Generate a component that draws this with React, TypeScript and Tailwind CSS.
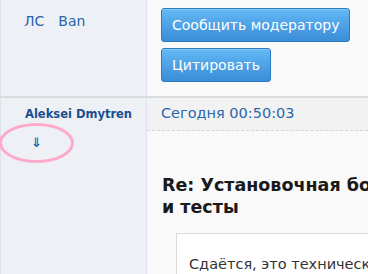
const btn =
  "h-[34px] px-[10px] border border-[#2b7bc4] rounded-[3px] bg-gradient-to-b from-[#63b8f4] to-[#3a8dd8] text-white text-[14px] leading-none text-left shadow-[inset_0_1px_0_rgba(255,255,255,0.25)]";

export default function App() {
  return (
    <div className="w-[368px] h-[274px] overflow-hidden bg-[#f9f9f9] font-['DejaVu_Sans',sans-serif]">
      {/* post actions */}
      <div className="flex h-[96px]">
        <div className="w-[147px] shrink-0 bg-[#edf1f6] border-l border-r border-[#dde3ea] pl-[23px] pt-[11px] flex gap-[14px] text-[14px] text-[#2a64aa]">
          <span>ЛС</span>
          <span>Ban</span>
        </div>
        <div className="flex-1 pl-[14px] pt-[8px] flex flex-col items-start gap-[6px]">
          <button className={btn}>Сообщить модератору</button>
          <button className={btn + " h-[33px]"}>Цитировать</button>
        </div>
      </div>

      <div className="h-[2px] bg-[#d9dcdf]" />

      {/* next post */}
      <div className="flex h-[176px]">
        <div className="relative w-[147px] shrink-0 bg-[#edf1f6] border-l border-r border-[#dde3ea] pt-[8px]">
          <div className="pl-[24px] text-[11.5px] font-bold text-[#1b4f8f] whitespace-nowrap overflow-hidden">
            Aleksei Dmytren
          </div>
          <div className="ml-[30px] mt-[13px] text-[13px] font-bold leading-none text-[#1a5fb0]">⇓</div>
          <div className="absolute left-[-2px] top-[25px] w-[75px] h-[40px] rounded-[50%] border-[3px] border-[#ffaacc]" />
        </div>
        <div className="flex-1 min-w-0">
          <div className="h-[33px] bg-[#f2f2f2] border-b border-dashed border-[#d6d6d6] pl-[14px] flex items-center text-[14.5px] text-[#2a66ad] whitespace-nowrap">
            Сегодня 00:50:03
          </div>
          <div className="pl-[15px] pt-[43px] w-[560px]">
            <div className="text-[17.5px] font-bold leading-[22px] text-[#1a1a1a] whitespace-nowrap">
              Re: Установочная большая сборка
              <br />
              и тесты
            </div>
            <div className="mt-[15px] ml-[14px] border border-[#dcdcdc] bg-white pl-[12px] pt-[20px] h-[60px] text-[14.5px] text-[#333] whitespace-nowrap">
              Сдаётся, это техническая проблема
            </div>
          </div>
        </div>
      </div>
    </div>
  );
}
